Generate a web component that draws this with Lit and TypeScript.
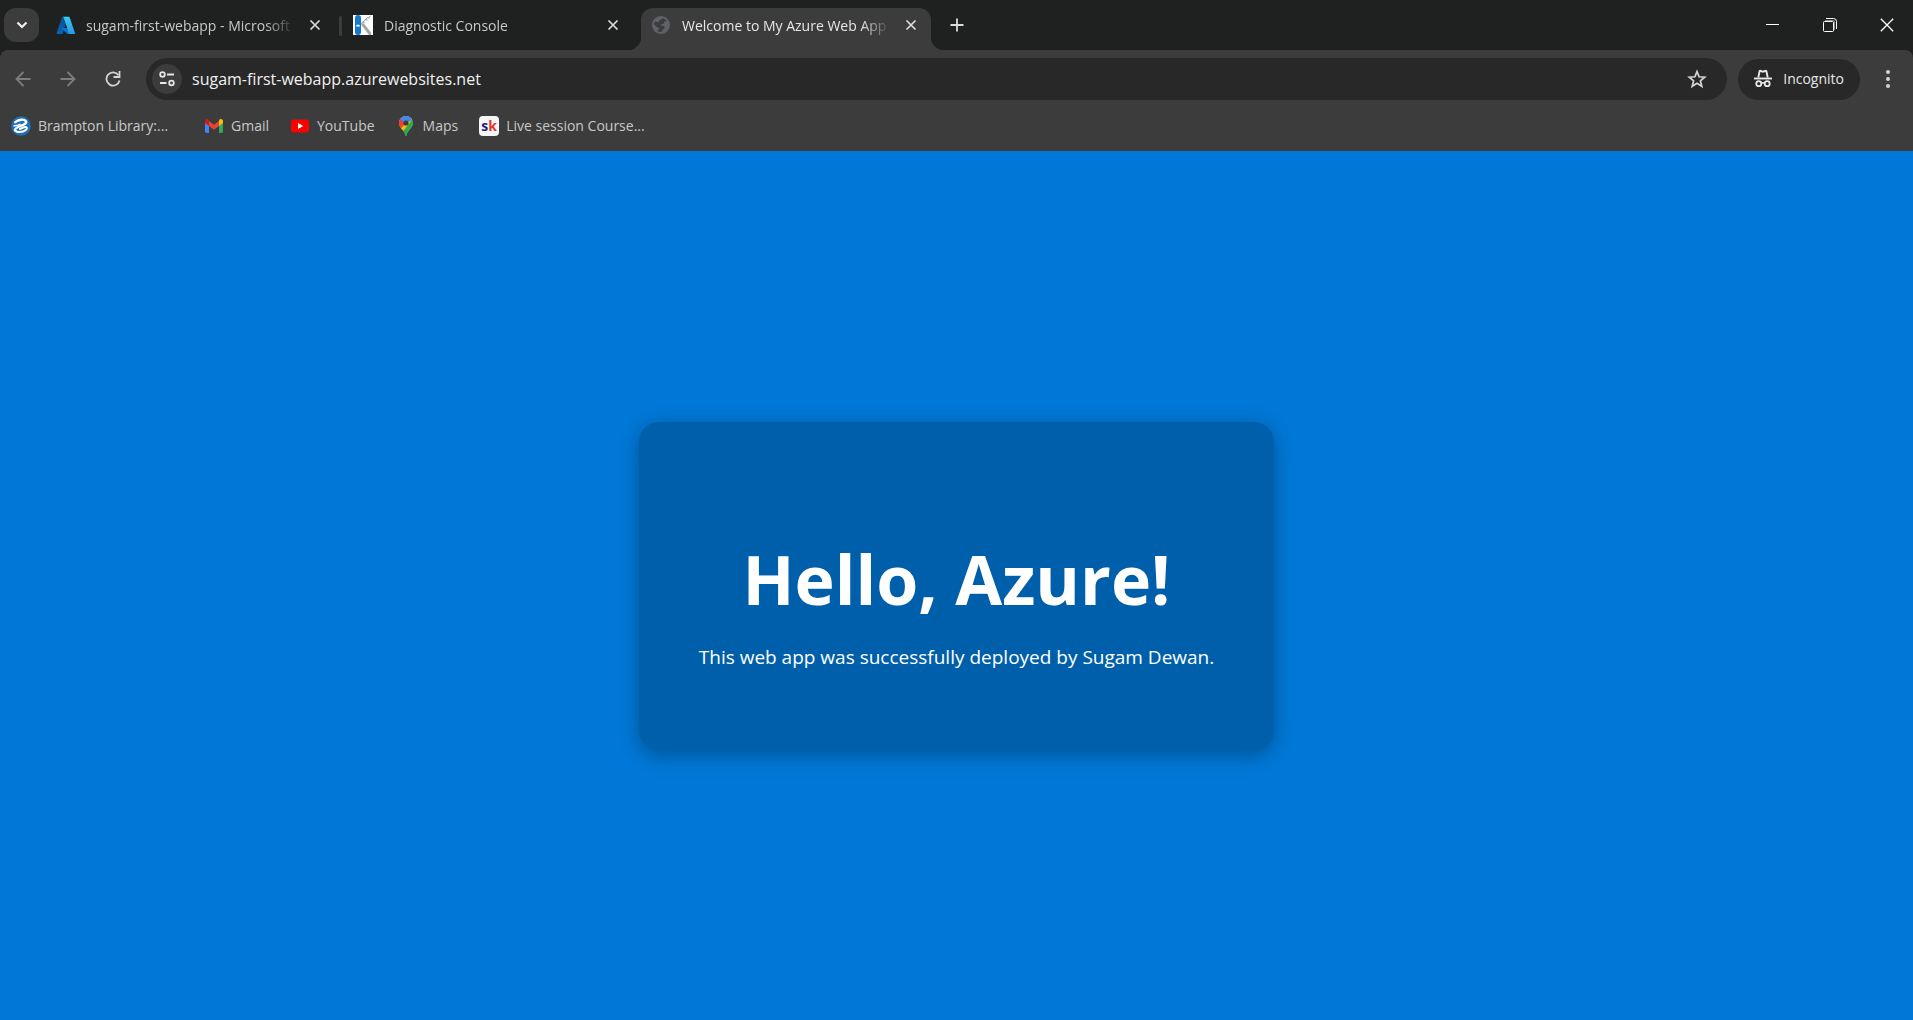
import { LitElement, html, css, svg, type TemplateResult } from "lit";
import { customElement, property } from "lit/decorators.js";

interface Tab {
  title: string;
  icon: TemplateResult;
  active?: boolean;
}

interface Bookmark {
  label: string;
  href: string;
  icon: TemplateResult;
  wide?: boolean;
}

const icon = (size: number, box: number, body: TemplateResult) => html`<svg
  width=${size} height=${size} viewBox="0 0 ${box} ${box}" fill="none" aria-hidden="true">${body}</svg>`;

const azureIcon = icon(20, 96, svg`
  <defs>
    <linearGradient id="az-a" x1="59" y1="7" x2="25" y2="106" gradientUnits="userSpaceOnUse"><stop stop-color="#114a8b"/><stop offset="1" stop-color="#0669bc"/></linearGradient>
    <linearGradient id="az-b" x1="46" y1="5" x2="84" y2="100" gradientUnits="userSpaceOnUse"><stop stop-color="#3ccbf4"/><stop offset="1" stop-color="#2892df"/></linearGradient>
  </defs>
  <g transform="translate(4 2)">
  <path d="M33.3 6.5h26L32.300 86.600a4.200 4.200 0 0 1-3.900 2.800H8.100a4.100 4.100 0 0 1-3.900-5.500L29.400 9.300a4.200 4.200 0 0 1 3.900-2.800z" fill="url(#az-a)"/>
  <path d="M71.200 60.300H29.900a1.900 1.900 0 0 0-1.300 3.300l26.500 24.700a4.200 4.200 0 0 0 2.900 1.100h23.400z" fill="#0078d4"/>
  <path d="M66.600 9.400a4.100 4.100 0 0 0-3.900-2.800H33.600a4.100 4.100 0 0 1 3.900 2.800L62.700 84a4.100 4.100 0 0 1-3.900 5.500h29.100a4.100 4.100 0 0 0 3.900-5.500z" fill="url(#az-b)"/>
  </g>`);

const kuduIcon = icon(20, 20, svg`
  <rect width="20" height="20" fill="#fff"/>
  <path d="M8 9.500l2.500-1.500L18 17.500V20h-2z" fill="#a6a6a6"/>
  <path d="M8.500 9l1-2 2 .500M10.500 7l1.500-2.500 2.500.500M13 4.500l1.500-2 2 .500M15.500 2.500L17.500 1" stroke="#999" stroke-width="1"/>
  <rect x="2" y="0" width="6" height="20" rx="3" fill="#1279cf"/>
  <path d="M3 11.500a2 2 0 0 1 4 0z" fill="#fff"/>`);

const globeIcon = icon(20, 20, svg`
  <circle cx="10" cy="10" r="9" fill="#5f6368"/>
  <path d="M11.500 3.200c1.500.300 3.200 1.300 4.100 2.800-.800.700-1.700.600-2.300 1.100-.800.700-.200 1.700-1.200 2-.900.300-1.700-.300-2.400.400-.500.600.300 1.300 1.300 1.300 1.700 0 2.600.700 2.600 1.800 0 1.900-1.700 1.300-2.200 2.700-.200.700-.300 1.300-1 1.600-1.400.200-3.200-.400-4.300-1.500 1.700-.300 2.200-1 1.800-2.100-.400-1-1.900-.900-2.700-1.800L3 9.300c.100-1 .500-2 1-2.800 1.200.100 2.400.900 3.500.400.900-.500.400-1.400 1.300-2 .700-.500 2.200-.300 2.700-1.700z" fill="#3c3c3c"/>`);

const closeIcon = icon(12, 12, svg`<path d="M1.500 1.500l9 9M10.500 1.500l-9 9" stroke="currentColor" stroke-width="1.700"/>`);
const chevronIcon = icon(12, 12, svg`<path d="M1.500 3.500L6 8l4.500-4.500" stroke="currentColor" stroke-width="2.200"/>`);
const plusIcon = icon(14, 14, svg`<path d="M7 .500v13M.500 7h13" stroke="currentColor" stroke-width="1.800"/>`);
const backIcon = icon(16, 16, svg`<path d="M15.500 8H1.500M8.500 1L1.500 8l7 7" stroke="currentColor" stroke-width="1.800"/>`);
const forwardIcon = icon(16, 16, svg`<path d="M.500 8h14M7.500 1l7 7-7 7" stroke="currentColor" stroke-width="1.800"/>`);
const reloadIcon = icon(16, 16, svg`
  <path d="M13.500 4.200A6.600 6.600 0 1 0 14.500 9.500" stroke="currentColor" stroke-width="1.800"/>
  <path d="M14.500 0v6H8.500" stroke="currentColor" stroke-width="1.800"/>`);
const tuneIcon = icon(16, 16, svg`
  <g stroke="currentColor" stroke-width="1.800"><circle cx="3.500" cy="3.500" r="2.300"/><path d="M8 3.500h7M1 12h6.500"/><circle cx="12.500" cy="12" r="2.300"/></g>`);
const starIcon = icon(20, 20, svg`<path d="M10 2.600l2.100 5.200 5.600.400-4.300 3.600 1.400 5.500L10 14.300l-4.800 3 1.400-5.500-4.300-3.600 5.600-.400z" stroke="currentColor" stroke-width="1.700" stroke-linejoin="miter"/>`);
const incognitoIcon = icon(20, 20, svg`
  <path d="M5.300 8.500l1.300-6.200c.100-.400.500-.600.900-.500L10 2.700l2.500-.900c.400-.100.800.100.900.500l1.300 6.200" stroke="currentColor" stroke-width="1.900"/>
  <path d="M1 9.500h18" stroke="currentColor" stroke-width="1.900"/>
  <circle cx="5.800" cy="14.700" r="2.500" stroke="currentColor" stroke-width="1.800"/>
  <circle cx="14.200" cy="14.700" r="2.500" stroke="currentColor" stroke-width="1.800"/>
  <path d="M8.200 14.400c.900-.900 2.700-.900 3.600 0" stroke="currentColor" stroke-width="1.700"/>`);
const menuIcon = icon(18, 18, svg`<g fill="currentColor"><circle cx="9" cy="2" r="2"/><circle cx="9" cy="9" r="2"/><circle cx="9" cy="16" r="2"/></g>`);

const minimizeIcon = icon(14, 14, svg`<path d="M0 6.500h13" stroke="#fff"/>`);
const restoreIcon = icon(14, 14, svg`
  <path d="M3 .500h7.500a3 3 0 0 1 3 3V11" stroke="#fff"/>
  <path d="M2 2.500h8.500a1 1 0 0 1 1 1V12" stroke="#8a8a8a"/>
  <rect x=".500" y="3.500" width="10" height="10" rx="1" stroke="#fff"/>`);
const quitIcon = icon(14, 14, svg`<path d="M.800.800l12.400 12.400M13.200.800L.800 13.200" stroke="#fff" stroke-width="1.300"/>`);

const libraryIcon = icon(20, 20, svg`
  <circle cx="10" cy="10" r="9.800" fill="#1d70b7"/>
  <path d="M4.200 6.200C7 3.200 13.500 2.800 15 5.300c1 2.200-2.500 3.500-5.500 4.700-3.200 1.300-6 2.500-5.500 4.200" stroke="#fff" stroke-width="2.400" stroke-linecap="round"/>
  <path d="M4.200 14.200c1.200 2.400 7.300 2.600 10.600-.200 1.500-1.300 1.500-3-.300-2.900-1.800.100-3.500.900-5.500 1.900" stroke="#fff" stroke-width="2" stroke-linecap="round"/>
  <path d="M3 9.800c2 .200 3.800-.300 6-1.400" stroke="#fff" stroke-width="1.500" stroke-linecap="round"/>`);
const gmailIcon = icon(20, 20, svg`
  <path d="M1 5v10.600C1 16.400 1.600 17 2.400 17H5V8z" fill="#4285f4"/>
  <path d="M15 8v9h2.600c.800 0 1.400-.600 1.400-1.400V5z" fill="#34a853"/>
  <path d="M5 5v5l5 3.800 5-3.800V5l-5 3.800z" fill="#ea4335"/>
  <path d="M15 4.800V10l4-3V5.300c0-2-2.200-2.800-3.500-1.800z" fill="#fbbc04"/>
  <path d="M5 4.800V10L1 7V5.300c0-2 2.200-2.800 3.500-1.800z" fill="#c5221f"/>`);
const youtubeIcon = icon(20, 20, svg`
  <rect x="1" y="3.500" width="18" height="13" rx="3.200" fill="#f00"/><path d="M8 7l5.200 3L8 13z" fill="#fff"/>`);
const mapsIcon = icon(20, 20, svg`
  <defs><clipPath id="pin"><path d="M10 0a7 7 0 0 0-7 7c0 5 5.600 7.300 6.300 12.300.100.900 1.300.900 1.400 0C11.400 14.300 17 12 17 7a7 7 0 0 0-7-7z"/></clipPath></defs>
  <g clip-path="url(#pin)">
    <rect width="20" height="20" fill="#34a853"/>
    <path d="M0 0h20L4.500 14.500H0z" fill="#fbbc04"/>
    <path d="M0 0h6l5 6-7 7.500H0z" fill="#ea4335"/>
    <path d="M3 3L5 0h12l-1 3-6 7z" fill="#4285f4"/>
    <path d="M10 7l-6.500 7.500 2.500 2 10-12z" fill="#fbbc04"/>
    <path d="M16 3l4 0v17H6.500v-3L16 4z" fill="#34a853"/>
    <path d="M0 4l3.800-1.600L8.500 7 3 13z" fill="#ea4335"/>
  </g>
  <circle cx="10" cy="7" r="2.600" fill="#3c3c3c"/>`);

const tabs: Tab[] = [
  { title: "sugam-first-webapp - Microsoft", icon: azureIcon },
  { title: "Diagnostic Console", icon: kuduIcon },
  { title: "Welcome to My Azure Web App", icon: globeIcon, active: true },
];

const bookmarks: Bookmark[] = [
  { label: "Brampton Library:...", href: "#library", icon: libraryIcon, wide: true },
  { label: "Gmail", href: "#gmail", icon: gmailIcon },
  { label: "YouTube", href: "#youtube", icon: youtubeIcon },
  { label: "Maps", href: "#maps", icon: mapsIcon },
  { label: "Live session Course...", href: "#course", icon: html`<span class="sk"><b class="s">s</b><b class="k">k</b></span>` },
];

const reset = css`
  * { box-sizing: border-box; }
  button, input { margin: 0; padding: 0; border: 0; background: none; color: inherit; font: inherit; }
  button { display: flex; align-items: center; justify-content: center; flex: none; cursor: default; }
  a { color: inherit; text-decoration: none; }
  svg { display: block; flex: none; }
`;

@customElement("tab-strip")
export class TabStrip extends LitElement {
  @property({ attribute: false }) items: Tab[] = [];

  static styles = [reset, css`
    :host { display: flex; align-items: stretch; height: 50px; padding-left: 4px; background: #1f2120; color: #dcdcdc; }
    .search { width: 35px; height: 34px; margin: 8px 6px 0 0; border-radius: 12px; background: #3c3c3c; color: #f0f0f0; }
    .tabs { display: flex; gap: 8px; min-width: 0; }
    .tab { position: relative; display: flex; align-items: center; width: 290px; min-width: 0; height: 42px; margin-top: 8px; padding: 0 10px 8px; color: #c8c8c8; }
    .tab.active { border-radius: 12px 12px 0 0; background: #3c3c3c; color: #e6e6e6; }
    .tab.active::before, .tab.active::after { content: ""; position: absolute; bottom: 0; width: 14px; height: 14px; }
    .tab.active::before { right: 100%; background: radial-gradient(circle at 0 0, transparent 14px, #3c3c3c 15px); }
    .tab.active::after { left: 100%; background: radial-gradient(circle at 100% 0, transparent 14px, #3c3c3c 15px); }
    .tab.divided::after { content: ""; position: absolute; right: -7px; top: 8px; width: 3px; height: 20px; border-radius: 2px; background: #3c3c3c; }
    .label { justify-content: flex-start; flex: 1; min-width: 0; gap: 11px; height: 34px; }
    .title { flex: 1; min-width: 0; padding-top: 1px; overflow: hidden; white-space: nowrap; text-align: left; mask-image: linear-gradient(to right, #000 calc(100% - 30px), transparent); }
    .close { width: 20px; height: 20px; margin-left: 10px; color: #dcdcdc; }
    .new { width: 34px; height: 34px; margin: 8px 0 0 9px; }
    .space { flex: 1; }
    .controls { display: flex; gap: 4px; }
    .controls button { width: 53px; height: 49px; }
  `];

  render() {
    return html`
      <button class="search" aria-label="Search tabs">${chevronIcon}</button>
      <div class="tabs">
        ${this.items.map((t, i) => html`
          <div class="tab ${t.active ? "active" : i === 0 ? "divided" : ""}">
            <button class="label">${t.icon}<span class="title">${t.title}</span></button>
            <button class="close" aria-label="Close tab">${closeIcon}</button>
          </div>`)}
      </div>
      <button class="new" aria-label="New tab">${plusIcon}</button>
      <div class="space"></div>
      <div class="controls">
        <button aria-label="Minimize">${minimizeIcon}</button>
        <button aria-label="Restore">${restoreIcon}</button>
        <button aria-label="Close">${quitIcon}</button>
      </div>`;
  }
}

@customElement("nav-toolbar")
export class NavToolbar extends LitElement {
  @property() url = "";

  static styles = [reset, css`
    :host { display: flex; align-items: center; padding: 8px 8px 0 6px; color: #d4d4d4; }
    .nav { display: flex; gap: 11px; margin-right: 16px; }
    .nav button { width: 34px; height: 34px; }
    .nav .off { color: #7d7d7d; }
    .omnibox { display: flex; align-items: center; flex: 1; min-width: 0; height: 42px; padding: 0 13px 0 6px; border-radius: 21px; background: #282828; }
    .site { width: 30px; height: 30px; border-radius: 15px; background: #3c3c3c; color: #e6e6e6; }
    .url { flex: 1; min-width: 0; height: 30px; margin-left: 10px; outline: 0; color: #f0f0f0; font-size: 16px; }
    .star { width: 34px; height: 34px; }
    .chip { height: 41px; margin: 0 11px; padding: 0 16px 0 15px; gap: 10px; border-radius: 21px; background: #282828; color: #e8e8e8; }
    .menu { width: 34px; height: 34px; }
  `];

  render() {
    return html`
      <div class="nav">
        <button class="off" aria-label="Back">${backIcon}</button>
        <button class="off" aria-label="Forward">${forwardIcon}</button>
        <button aria-label="Reload">${reloadIcon}</button>
      </div>
      <div class="omnibox">
        <button class="site" aria-label="View site information">${tuneIcon}</button>
        <input class="url" type="text" aria-label="Address and search bar" .value=${this.url} />
        <button class="star" aria-label="Bookmark this tab">${starIcon}</button>
      </div>
      <button class="chip">${incognitoIcon}<span>Incognito</span></button>
      <button class="menu" aria-label="Menu">${menuIcon}</button>`;
  }
}

@customElement("bookmarks-bar")
export class BookmarksBar extends LitElement {
  @property({ attribute: false }) items: Bookmark[] = [];

  static styles = [reset, css`
    :host { display: flex; align-items: center; gap: 21px; height: 51px; padding: 0 11px; color: #c8c8c8; white-space: nowrap; }
    a { display: flex; align-items: center; gap: 7px; }
    .wide { min-width: 172px; }
    .sk { display: flex; align-items: center; justify-content: center; width: 20px; height: 20px; border-radius: 4px; background: #f5f5f8; font-size: 14px; line-height: 20px; }
    .s { color: #1c1c8c; }
    .k { color: #e8332a; }
  `];

  render() {
    return this.items.map((b) => html`<a class=${b.wide ? "wide" : ""} href=${b.href}>${b.icon}<span>${b.label}</span></a>`);
  }
}

@customElement("hello-page")
export class HelloPage extends LitElement {
  static styles = [reset, css`
    :host { display: flex; align-items: center; justify-content: center; background: #0078d7; color: #fff; }
    .card { padding: 60px; border-radius: 20px; background: #005fab; box-shadow: 0 5px 20px rgba(0, 0, 0, 0.3); text-align: center; }
    h1 { margin: 50px 0 18px; font-size: 68px; line-height: 93px; font-weight: 700; }
    p { margin: 0 0 19px; font-size: 19px; line-height: 28px; }
  `];

  render() {
    return html`
      <main class="card">
        <h1>Hello, Azure!</h1>
        <p>This web app was successfully deployed by Sugam Dewan.</p>
      </main>`;
  }
}

@customElement("app-root")
export class AppRoot extends LitElement {
  static styles = css`
    :host { display: flex; flex-direction: column; min-height: 100vh; background: #1f2120; font-family: "Open Sans", "Noto Sans", sans-serif; font-size: 14px; line-height: 20px; }
    .bars { border-radius: 8px 8px 0 0; background: #3c3c3c; }
    hello-page { flex: 1; }
  `;

  render() {
    return html`
      <tab-strip .items=${tabs}></tab-strip>
      <div class="bars">
        <nav-toolbar url="sugam-first-webapp.azurewebsites.net"></nav-toolbar>
        <bookmarks-bar .items=${bookmarks}></bookmarks-bar>
      </div>
      <hello-page></hello-page>`;
  }
}
